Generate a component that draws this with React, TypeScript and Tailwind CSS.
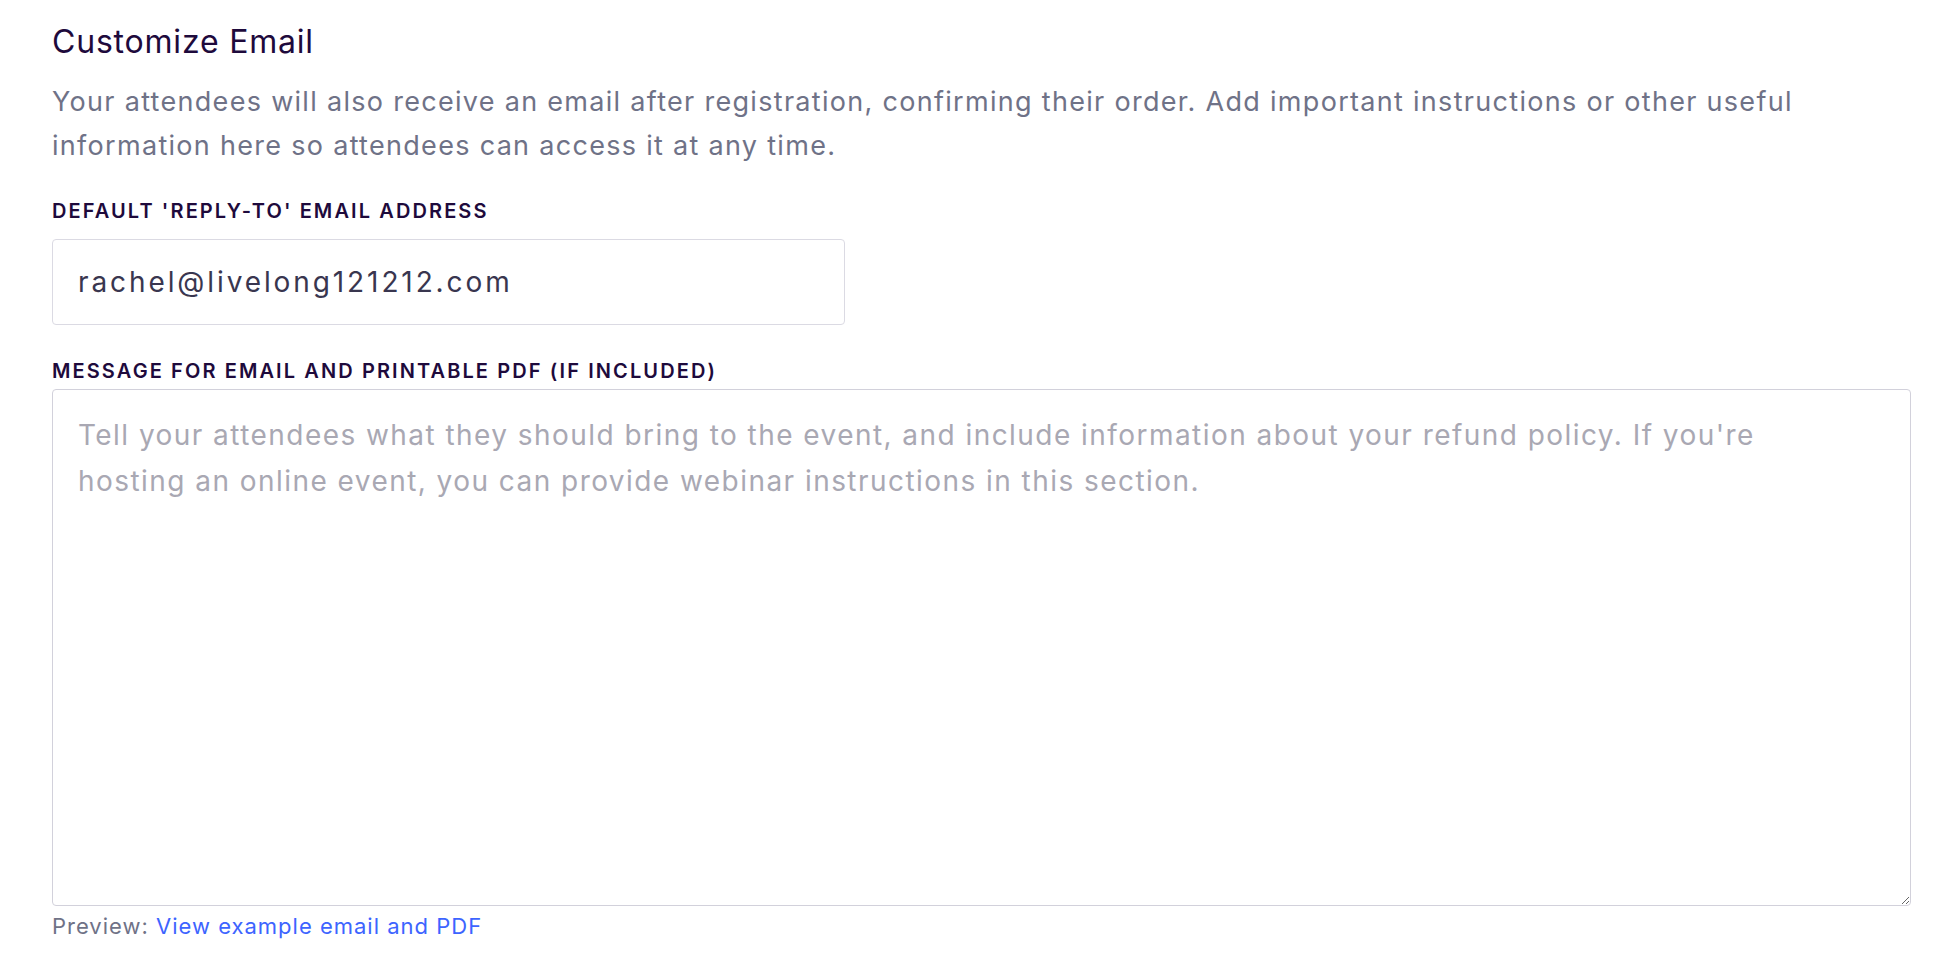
export default function App() {
  return (
    <div className="min-h-screen w-full bg-white pl-[52px] pr-[43px] pt-[22px] font-['Inter',sans-serif]">
      <h2 className="text-[32px] leading-[40px] font-normal tracking-[0.8px] text-[#1e0a3c]">
        Customize Email
      </h2>
      <p className="mt-[18px] text-[27px] leading-[44px] tracking-[1.3px] text-[#6f7287]">
        Your attendees will also receive an email after registration, confirming their order. Add
        important instructions or other useful
        <br />
        information here so attendees can access it at any time.
      </p>

      <label className="mt-[31px] block text-[20px] leading-[24px] font-semibold uppercase tracking-[2.1px] text-[#1e0a3c]">
        Default 'Reply-To' Email Address
      </label>
      <input
        type="text"
        defaultValue="rachel@livelong121212.com"
        className="mt-[16px] block h-[86px] w-[793px] rounded-[4px] border border-[#dbdae3] px-[25px] text-[28px] tracking-[2.9px] text-[#39364f] outline-none"
      />

      <label className="mt-[34px] block text-[20px] leading-[24px] font-semibold uppercase tracking-[2.1px] text-[#1e0a3c]">
        Message for email and printable PDF (if included)
      </label>
      <textarea
        placeholder={
          "Tell your attendees what they should bring to the event, and include information about your refund policy. If you're\nhosting an online event, you can provide webinar instructions in this section."
        }
        className="mt-[6px] block h-[517px] w-full rounded-[4px] border border-[#d2d1db] px-[25px] pt-[22px] text-[28px] leading-[46px] tracking-[1.45px] text-[#39364f] outline-none placeholder:text-[#a9a8b3]"
      />

      <p className="mt-[6px] text-[22px] leading-[28px] tracking-[1px] text-[#6f7287]">
        Preview:{" "}
        <a href="#preview" className="text-[#3d64ff]">
          View example email and PDF
        </a>
      </p>
    </div>
  );
}
